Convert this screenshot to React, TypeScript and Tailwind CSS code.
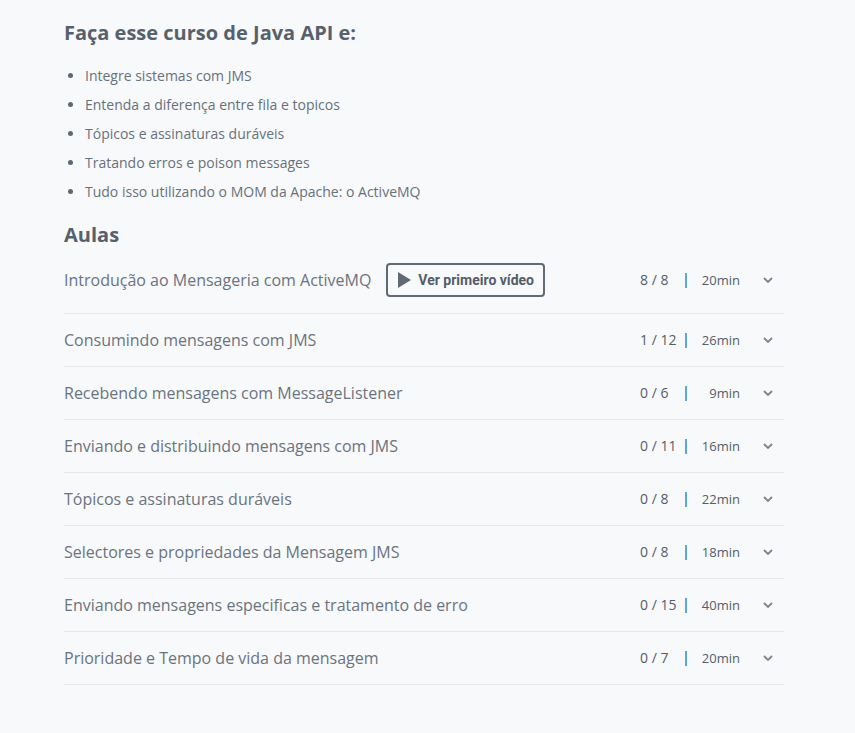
const beneficios = [
  "Integre sistemas com JMS",
  "Entenda a diferença entre fila e topicos",
  "Tópicos e assinaturas duráveis",
  "Tratando erros e poison messages",
  "Tudo isso utilizando o MOM da Apache: o ActiveMQ",
];

const aulas = [
  { titulo: "Introdução ao Mensageria com ActiveMQ", feitos: 8, total: 8, tempo: "20min", video: true },
  { titulo: "Consumindo mensagens com JMS", feitos: 1, total: 12, tempo: "26min" },
  { titulo: "Recebendo mensagens com MessageListener", feitos: 0, total: 6, tempo: "9min" },
  { titulo: "Enviando e distribuindo mensagens com JMS", feitos: 0, total: 11, tempo: "16min" },
  { titulo: "Tópicos e assinaturas duráveis", feitos: 0, total: 8, tempo: "22min" },
  { titulo: "Selectores e propriedades da Mensagem JMS", feitos: 0, total: 8, tempo: "18min" },
  { titulo: "Enviando mensagens especificas e tratamento de erro", feitos: 0, total: 15, tempo: "40min" },
  { titulo: "Prioridade e Tempo de vida da mensagem", feitos: 0, total: 7, tempo: "20min" },
];

function Chevron() {
  return (
    <svg width="10" height="6" viewBox="0 0 10 6" className="text-[#7b858f]">
      <path d="M1 1l4 4 4-4" fill="none" stroke="currentColor" strokeWidth="1.8" />
    </svg>
  );
}

export default function App() {
  return (
    <div
      className="min-h-[733px] w-full bg-[#f8f9fb] pt-[19px] pl-[64px] pr-[71px]"
      style={{ fontFamily: '"Open Sans", "Liberation Sans", sans-serif' }}
    >
      <h2 className="text-[20px] leading-[28px] font-bold text-[#56616c]">Faça esse curso de Java API e:</h2>

      <ul className="mt-[14px]">
        {beneficios.map((b) => (
          <li key={b} className="flex items-center text-[14px] leading-[29px] text-[#66717b]">
            <span className="ml-[4px] mr-[12px] h-[5px] w-[5px] rounded-full bg-[#5d6873]" />
            {b}
          </li>
        ))}
      </ul>

      <h2 className="mt-[17px] text-[20px] leading-[24px] font-bold text-[#56616c]">Aulas</h2>

      <div>
        {aulas.map((a) => (
          <div key={a.titulo} className="flex items-center border-b border-[#e4e7ea] py-4">
            <div className="flex flex-1 items-center leading-[20px]">
              <span className="text-[16px] text-[#6a747e]">{a.titulo}</span>
              {a.video && (
                <button
                  className="ml-[15px] flex h-[34px] items-center gap-[7px] rounded-[4px] border-2 border-[#5f6a75] pl-[10px] pr-[9px] text-[14px] font-bold text-[#535e69]"
                  style={{ fontFamily: 'Roboto, "Liberation Sans", sans-serif' }}
                >
                  <svg width="13" height="16" viewBox="0 0 13 16">
                    <path d="M0 0L13 8L0 16Z" fill="#5f6a75" />
                  </svg>
                  Ver primeiro vídeo
                </button>
              )}
            </div>
            <div className="flex items-center text-[13px] leading-[20px] text-[#535e69]">
              <span className="ml-[2px] w-[45px] text-[14px]">
                {a.feitos} / {a.total}
              </span>
              <span className="h-[15px] w-[2px] bg-[#5aa9dc]" />
              <span className="w-[53px] text-right">{a.tempo}</span>
              <span className="ml-[23px] mr-[11px] flex">
                <Chevron />
              </span>
            </div>
          </div>
        ))}
      </div>
    </div>
  );
}
